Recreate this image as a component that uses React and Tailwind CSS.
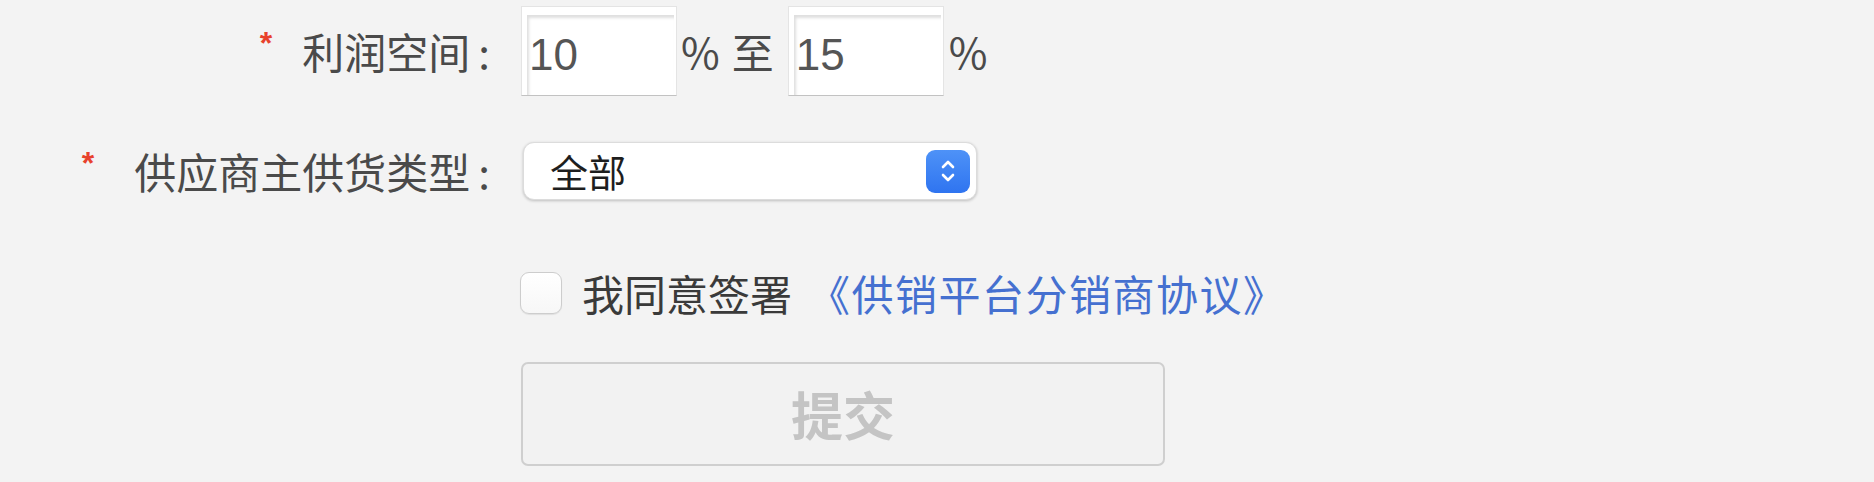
import React from "react";

const cjk = { fontFamily: '"Noto Sans CJK SC", "Noto Sans", sans-serif' };

function Label({ children, starGap }) {
  return (
    <div className="w-[490px] shrink-0 flex items-center justify-end text-[42px] leading-none text-[#4a4a4a]" style={cjk}>
      <span className={"text-[#e8412c] text-[32px] font-bold -translate-y-[8px] " + starGap} style={{ fontFamily: '"Liberation Sans", sans-serif' }}>*</span>
      <span>{children}</span>
      <span className="ml-[8px]">:</span>
    </div>
  );
}

function NumInput({ value }) {
  return (
    <div className="w-[156px] h-[90px] bg-white border border-[#e4e4e4] border-b-[#c2c2c2] pt-[8px] pl-[5px] pr-[2px] flex">
      <div className="flex-1 flex items-center pl-[2px] shadow-[inset_2px_3px_3px_rgba(0,0,0,0.13)] text-[44px] text-[#555] leading-none" style={{ fontFamily: '"Liberation Sans", sans-serif' }}>
        {value}
      </div>
    </div>
  );
}

export default function App() {
  return (
    <div className="w-[1874px] h-[482px] bg-[#f3f3f3] overflow-hidden" style={cjk}>
      {/* Row 1 */}
      <div className="flex items-center pt-[6px]">
        <Label starGap="mr-[30px]">利润空间</Label>
        <div className="ml-[31px] flex items-center text-[42px] leading-none text-[#4a4a4a]">
          <NumInput value="10" />
          <span className="ml-[4px]">%</span>
          <span className="ml-[12px]">至</span>
          <span className="ml-[14px]"><NumInput value="15" /></span>
          <span className="ml-[5px]">%</span>
        </div>
      </div>

      {/* Row 2 */}
      <div className="flex items-center mt-[46px]">
        <Label starGap="mr-[40px]">供应商主供货类型</Label>
        <div className="ml-[33px] w-[454px] h-[58px] bg-white rounded-[11px] border border-[#dcdcdc] shadow-[0_1px_3px_rgba(0,0,0,0.22)] flex items-center justify-between pl-[26px] pr-[6px]">
          <span className="text-[38px] leading-none text-[#1e1e1e]">全部</span>
          <div className="w-[44px] h-[43px] rounded-[9px] bg-gradient-to-b from-[#4e92f7] to-[#2f74f0] flex items-center justify-center">
            <svg width="22" height="28" viewBox="0 0 22 28" fill="none" stroke="white" strokeWidth="2.6" strokeLinecap="round" strokeLinejoin="round">
              <path d="M6 10 L11 5 L16 10" />
              <path d="M6 18 L11 23 L16 18" />
            </svg>
          </div>
        </div>
      </div>

      {/* Row 3 */}
      <div className="flex items-center mt-[72px] pl-[520px]">
        <div className="w-[42px] h-[42px] rounded-[9px] bg-gradient-to-b from-white to-[#f7f7f7] border-[1.5px] border-[#cdcdcd] shadow-[0_1px_1px_rgba(0,0,0,0.08)]" />
        <span className="ml-[20px] text-[42px] leading-none text-[#3a3a3a]">我同意签署</span>
        <span className="ml-[16px] text-[42px] leading-none tracking-[1.5px] text-[#4570d0]">《供销平台分销商协议》</span>
      </div>

      {/* Row 4 */}
      <div className="flex mt-[48px] pl-[521px]">
        <div className="w-[644px] h-[104px] rounded-[7px] border-2 border-[#cfcfcf] bg-[#f2f2f2] flex items-center justify-center">
          <span className="text-[52px] font-bold leading-none text-[#c4c4c4]">提交</span>
        </div>
      </div>
    </div>
  );
}
